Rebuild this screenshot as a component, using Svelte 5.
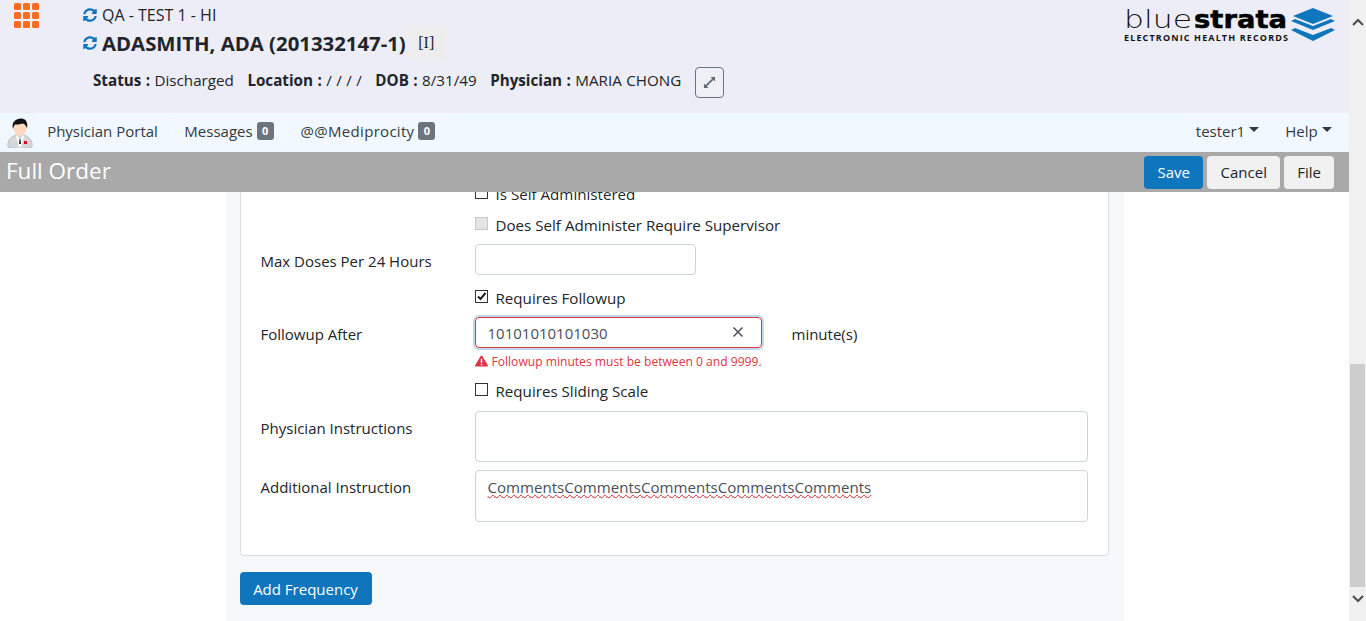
<script>
  const syncPath = "M370.72 133.28C339.458 104.008 298.888 87.962 255.848 88c-77.458.068-144.328 53.178-162.791 126.85-1.344 5.363-6.122 9.15-11.651 9.15H24.103c-7.498 0-13.194-6.807-11.807-14.176C33.933 94.924 134.813 8 256 8c66.448 0 126.791 26.136 171.315 68.685L463.03 40.97C478.149 25.851 504 36.559 504 57.941V192c0 13.255-10.745 24-24 24H345.941c-21.382 0-32.09-25.851-16.971-40.971l41.75-41.749zM32 296h134.059c21.382 0 32.09 25.851 16.971 40.971l-41.75 41.75c31.262 29.273 71.835 45.319 114.876 45.28 77.418-.07 144.315-53.144 162.787-126.849 1.344-5.363 6.122-9.15 11.651-9.15h57.304c7.498 0 13.194 6.807 11.807 14.176C478.067 417.076 377.187 504 256 504c-66.448 0-126.791-26.136-171.315-68.685L48.97 471.03C33.851 486.149 8 475.441 8 454.059V320c0-13.255 10.745-24 24-24z";
  const dots = Array(9).fill(0);
</script>

<div class="page">
  <div class="main">
    <header class="patient">
      <div class="apps">
        {#each dots as _}<span></span>{/each}
      </div>
      <div class="info">
        <div class="facility">
          <svg class="sync" viewBox="0 0 512 512"><path d={syncPath} /></svg>
          <span>QA - TEST 1 - HI</span>
        </div>
        <div class="name">
          <svg class="sync" viewBox="0 0 512 512"><path d={syncPath} /></svg>
          <h1>ADASMITH, ADA (201332147-1)</h1>
          <span class="chip">[I]</span>
        </div>
        <div class="meta">
          <span><b>Status :</b> Discharged</span>
          <span><b>Location :</b> / / / /</span>
          <span><b>DOB :</b> 8/31/49</span>
          <span><b>Physician :</b> MARIA CHONG</span>
          <button class="expand" aria-label="Expand">
            <svg viewBox="0 0 14 14" width="13" height="13">
              <path d="M3 11l8-8" stroke="#5f6b76" stroke-width="2" fill="none" />
              <path d="M8 1h5v5zM6 13H1V8z" fill="#5f6b76" />
            </svg>
          </button>
        </div>
      </div>
      <svg class="logo" viewBox="0 0 212 34" width="212" height="34">
        <text x="0" y="20" class="blue" textLength="68" lengthAdjust="spacingAndGlyphs">blue</text>
        <text x="70" y="20" class="strata" textLength="93" lengthAdjust="spacingAndGlyphs">strata</text>
        <text x="0" y="33" class="ehr" textLength="164" lengthAdjust="spacing">ELECTRONIC HEALTH RECORDS</text>
        <path d="M189 0l20 8-20 8-20-8z" fill="#0f75bc" />
        <path d="M167 13l4-2 18 7 18-7 4 2-22 9z" fill="#0f75bc" />
        <path d="M167 22l4-2 18 7 18-7 4 2-22 11z" fill="#0f75bc" />
      </svg>
    </header>

    <nav class="topnav">
      <svg class="avatar" viewBox="0 0 26 30" width="26" height="30">
        <path d="M1 29c-1-7 3-10 8-12h8c5 2 9 5 8 12-4 2-20 2-24 0z" fill="#d5d8da" stroke="#9da3a6" stroke-width=".6" />
        <path d="M10 17l3 5 3-5 1 1-3 11h-2L9 18z" fill="#fff" />
        <path d="M12.500 21h1l.5 5h-2z" fill="#222" />
        <rect x="17" y="23" width="3" height="3" fill="#d3121b" />
        <ellipse cx="13" cy="10.500" rx="6.500" ry="7.500" fill="#fbd9c0" />
        <path d="M6 11C4 4 9 .500 14 .500c5 0 7 4 6 10-1-3-2-4-4-5-3 1-7 1-8 1-1 1-1.500 3-2 4.500z" fill="#111" />
      </svg>
      <a class="item" style="width:135px">Physician Portal</a>
      <a class="item" style="width:114px">Messages <span class="badge">0</span></a>
      <a class="item wide" style="width:160px">@@Mediprocity <span class="badge">0</span></a>
      <div class="spacer"></div>
      <a class="item caret" style="width:87px">tester1</a>
      <a class="item caret" style="width:71px">Help</a>
    </nav>

    <div class="titlebar">
      <h2>Full Order</h2>
      <div class="actions">
        <button class="btn primary save">Save</button>
        <button class="btn light cancel">Cancel</button>
        <button class="btn light">File</button>
      </div>
    </div>

    <div class="scroll">
      <section class="panel">
        <div class="card">
          <div class="form">
            <div></div>
            <label class="check"><input type="checkbox" />Is Self Administered</label>

            <div></div>
            <label class="check"><input type="checkbox" disabled />Does Self Administer Require Supervisor</label>

            <div class="lbl mid first">Max Doses Per 24 Hours</div>
            <input class="field short" type="text" />

            <div></div>
            <label class="check"><input type="checkbox" checked />Requires Followup</label>

            <div class="lbl mid second">Followup After</div>
            <div class="followup">
              <div class="invalid">
                <span>10101010101030</span>
                <svg viewBox="0 0 12 12" width="12" height="12"><path d="M1.500 1.500l9 9M10.500 1.500l-9 9" stroke="#4a4f54" stroke-width="1.500" fill="none" /></svg>
              </div>
              <span class="unit">minute(s)</span>
            </div>

            <div></div>
            <div class="error">
              <svg viewBox="0 0 14 12" width="13" height="12"><path d="M7 0c.4 0 .7.200.9.500l5.900 10c.4.700-.1 1.500-.9 1.500H1.100c-.8 0-1.300-.8-.9-1.500l5.900-10C6.300.200 6.600 0 7 0z" fill="#dc3545" /><rect x="6.200" y="3.500" width="1.600" height="4.500" fill="#fff" /><rect x="6.200" y="9" width="1.600" height="1.600" fill="#fff" /></svg>
              Followup minutes must be between 0 and 9999.
            </div>

            <div></div>
            <label class="check"><input type="checkbox" />Requires Sliding Scale</label>

            <div class="lbl">Physician Instructions</div>
            <div class="area h51"></div>

            <div class="lbl">Additional Instruction</div>
            <div class="area h52"><span class="misspelt">CommentsCommentsCommentsCommentsComments</span></div>
          </div>
        </div>
        <button class="btn primary add">Add Frequency</button>
      </section>
    </div>
  </div>

  <div class="scrollbar">
    <svg viewBox="0 0 12 8" width="12" height="8"><path d="M1 7l5-5 5 5" stroke="#505050" stroke-width="2.200" fill="none" /></svg>
    <div class="track"><div class="thumb"></div></div>
    <svg viewBox="0 0 12 8" width="12" height="8"><path d="M1 1l5 5 5-5" stroke="#505050" stroke-width="2.200" fill="none" /></svg>
  </div>
</div>

<style>
  :global(body) {
    margin: 0;
    font-family: "Open Sans", "Noto Sans", sans-serif;
    font-size: 15px;
    color: #212529;
  }
  .page {
    display: flex;
    height: 621px;
    overflow: hidden;
  }
  .main {
    flex: 1;
    min-width: 0;
    display: flex;
    flex-direction: column;
  }
  .patient {
    height: 113px;
    flex: none;
    background: #ecedf6;
    display: flex;
    box-sizing: border-box;
    padding: 3px 13px 0 14px;
  }
  .apps {
    display: grid;
    grid-template-columns: repeat(3, 7px);
    grid-auto-rows: 7px;
    gap: 2px;
    width: 25px;
    height: 25px;
  }
  .apps span {
    background: #ff6a21;
    border-radius: 1.5px;
  }
  .info {
    margin-left: 44px;
    flex: 1;
  }
  .sync {
    width: 14px;
    height: 14px;
    fill: #0f75bc;
    flex: none;
  }
  .facility {
    display: flex;
    align-items: center;
    gap: 5px;
    height: 24px;
    font-size: 16px;
  }
  .name {
    display: flex;
    align-items: center;
    gap: 5px;
    height: 33px;
    margin-top: -1px;
  }
  .name h1 {
    margin: 1px 0 0;
    font-size: 20.35px;
    font-weight: 700;
  }
  .chip {
    width: 39px;
    height: 33px;
    background: #ededed;
    margin-left: -4px;
    display: flex;
    align-items: center;
    justify-content: center;
    font-size: 16px;
    font-family: "Liberation Serif", serif;
  }
  .meta {
    display: flex;
    align-items: center;
    margin: 8px 0 0 10px;
    gap: 13.5px;
    font-size: 15.2px;
    word-spacing: 0.5px;
  }
  .meta span {
    margin-bottom: 6px;
  }
  .expand {
    width: 29px;
    height: 31px;
    border: 1px solid #6c757d;
    border-radius: 4px;
    background: #eef0f5;
    padding: 0;
    display: flex;
    align-items: center;
    justify-content: center;
  }
  .logo {
    flex: none;
    margin-top: 5px;
  }
  .logo .blue {
    font: 200 25px "DejaVu Sans", sans-serif;
    fill: #111;
  }
  .logo .strata {
    font: 700 25px "DejaVu Sans", sans-serif;
    fill: #000;
    stroke: #000;
    stroke-width: 0.5;
  }
  .logo .ehr {
    font: 700 9px "Open Sans", sans-serif;
    fill: #111;
  }
  .topnav {
    height: 39px;
    flex: none;
    background: #eff7ff;
    display: flex;
    box-sizing: border-box;
    padding: 1px 5px 0 7px;
    gap: 2px;
  }
  .avatar {
    margin: 4px 0 0 0;
  }
  .item {
    height: 33px;
    display: flex;
    align-items: center;
    justify-content: center;
    gap: 4px;
    background: #f1f8ff;
    border-radius: 3px;
    box-shadow: 0 0 0 1px #f3f9ff;
    font-size: 15px;
    color: #343a40;
  }
  .wide {
    letter-spacing: 0.3px;
  }
  .caret::after {
    content: "";
    border: 5px solid transparent;
    border-top-color: #343a40;
    border-bottom: 0;
    margin-top: -2px;
  }
  .spacer {
    flex: 1;
  }
  .badge {
    background: #6c757d;
    color: #fff;
    font-size: 11px;
    font-weight: 700;
    border-radius: 3px;
    width: 17px;
    height: 18px;
    display: flex;
    align-items: center;
    justify-content: center;
    letter-spacing: 0;
  }
  .titlebar {
    height: 40px;
    flex: none;
    background: #a9a9a9;
    display: flex;
    align-items: center;
    justify-content: space-between;
    padding: 0 15px 0 6px;
  }
  .titlebar h2 {
    margin: 0 0 3px;
    font-size: 22.5px;
    font-weight: 400;
    color: #fff;
  }
  .actions {
    display: flex;
    gap: 4px;
  }
  .btn {
    height: 33px;
    border: 1px solid transparent;
    border-radius: 4px;
    font: inherit;
    padding: 0 12px;
  }
  .save {
    width: 59px;
    padding: 0;
  }
  .cancel {
    width: 73px;
    padding: 0;
  }
  .primary {
    background: #0f75bc;
    color: #fff;
  }
  .light {
    background: #f1f1f1;
    color: #212529;
  }
  .scroll {
    flex: 1;
    min-height: 0;
    overflow: hidden;
    display: flex;
    justify-content: center;
    align-items: flex-end;
    background: #fff;
  }
  .panel {
    width: 898px;
    box-sizing: border-box;
    background: #f7f8fa;
    padding: 0 15px 16px 14px;
  }
  .card {
    background: #fff;
    border: 1px solid #dcdee2;
    border-top: 0;
    border-radius: 0 0 4px 4px;
    padding: 0 20px 33px;
  }
  .form {
    display: grid;
    grid-template-columns: 214px 1fr;
    row-gap: 7px;
    align-items: start;
  }
  .lbl {
    padding-top: 8px;
  }
  .lbl.mid {
    align-self: center;
    padding-top: 0;
  }
  .lbl.first {
    padding-bottom: 2px;
  }
  .lbl.second {
    padding-top: 2px;
  }
  .check {
    display: flex;
    align-items: center;
    height: 24px;
    font-size: 15.15px;
  }
  .check input {
    appearance: none;
    width: 13px;
    height: 13px;
    margin: -3px 8px 0 0;
    border: 1px solid #333;
    background: #fff;
    flex: none;
    box-sizing: border-box;
  }
  .check input:disabled {
    border-color: #c8c8c8;
    background: #e4e4e4;
  }
  .check input:checked {
    background: #fff url("data:image/svg+xml,%3Csvg xmlns='http://www.w3.org/2000/svg' viewBox='0 0 11 11'%3E%3Cpath d='M2 5.500l2.500 2.500L9.500 2' stroke='%23222' stroke-width='2' fill='none'/%3E%3C/svg%3E") center no-repeat;
  }
  .field {
    height: 31px;
    box-sizing: border-box;
    border: 1px solid #ced4da;
    border-radius: 4px;
    display: block;
  }
  .short {
    width: 221px;
    margin-bottom: 4px;
  }
  .followup {
    display: flex;
    align-items: center;
  }
  .invalid {
    width: 287px;
    height: 31px;
    box-sizing: border-box;
    border: 1px solid #dc3545;
    border-radius: 4px;
    box-shadow: 0 0 0 2px #bfd9ec;
    display: flex;
    align-items: center;
    justify-content: space-between;
    padding: 1px 17px 0 12px;
    color: #495057;
  }
  .invalid svg {
    margin-top: -3px;
  }
  .unit {
    margin: 2px 0 0 30px;
  }
  .error {
    display: flex;
    align-items: center;
    gap: 4px;
    font-size: 12.1px;
    color: #dc3545;
    margin: -3px 0 2px;
    height: 18px;
  }
  .area {
    box-sizing: border-box;
    border: 1px solid #ced4da;
    border-radius: 4px;
    padding: 6px 12px;
    color: #495057;
    margin-top: 1px;
    font-size: 15.08px;
  }
  .h51 {
    height: 51px;
  }
  .h52 {
    height: 52px;
  }
  .misspelt {
    text-decoration: underline wavy #d9232d 1px;
    text-underline-offset: 1px;
  }
  .add {
    margin-top: 16px;
    display: block;
    width: 132px;
    padding: 0;
  }
  .scrollbar {
    width: 17px;
    flex: none;
    background: #f0f0f0;
    display: flex;
    flex-direction: column;
    align-items: center;
    padding: 18px 0;
    box-sizing: border-box;
  }
  .track {
    flex: 1;
    width: 15px;
    display: flex;
    align-items: flex-end;
    margin: 10px 0 8px;
  }
  .thumb {
    width: 100%;
    height: 223px;
    background: #cdcdcd;
  }
</style>
